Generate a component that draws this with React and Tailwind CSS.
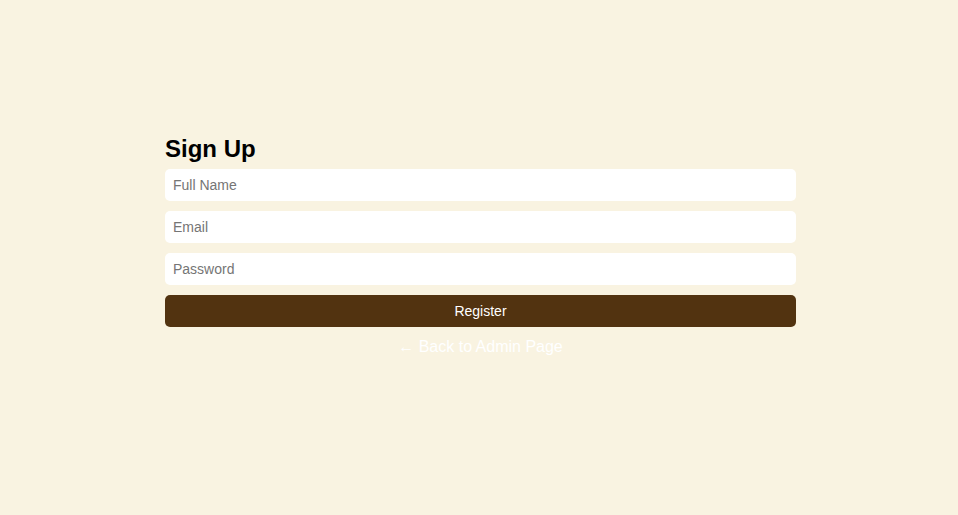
export default function App() {
    return (
        <div className="min-h-[515px] w-full bg-[#f9f3e1] pt-[133px] font-['Liberation_Sans',Arial,sans-serif]">
            <div className="ml-[165px] w-[631px] flex flex-col">
                <h2 className="text-2xl font-bold text-black mb-1 leading-8">Sign Up</h2>
                <form className="flex flex-col gap-[10px]" onSubmit={(e) => e.preventDefault()}>
                    <input
                        type="text"
                        placeholder="Full Name"
                        className="h-8 w-full rounded-[5px] bg-white px-2 text-sm text-black placeholder:text-[#757575] outline-none"
                    />
                    <input
                        type="email"
                        placeholder="Email"
                        className="h-8 w-full rounded-[5px] bg-white px-2 text-sm text-black placeholder:text-[#757575] outline-none"
                    />
                    <input
                        type="password"
                        placeholder="Password"
                        className="h-8 w-full rounded-[5px] bg-white px-2 text-sm text-black placeholder:text-[#757575] outline-none"
                    />
                    <button
                        type="submit"
                        className="h-8 w-full rounded-[5px] bg-[#523310] text-sm text-white"
                    >
                        Register
                    </button>
                </form>
                <a href="#" className="mt-2 text-center text-base leading-6 text-white">
                    ← Back to Admin Page
                </a>
            </div>
        </div>
    );
}
